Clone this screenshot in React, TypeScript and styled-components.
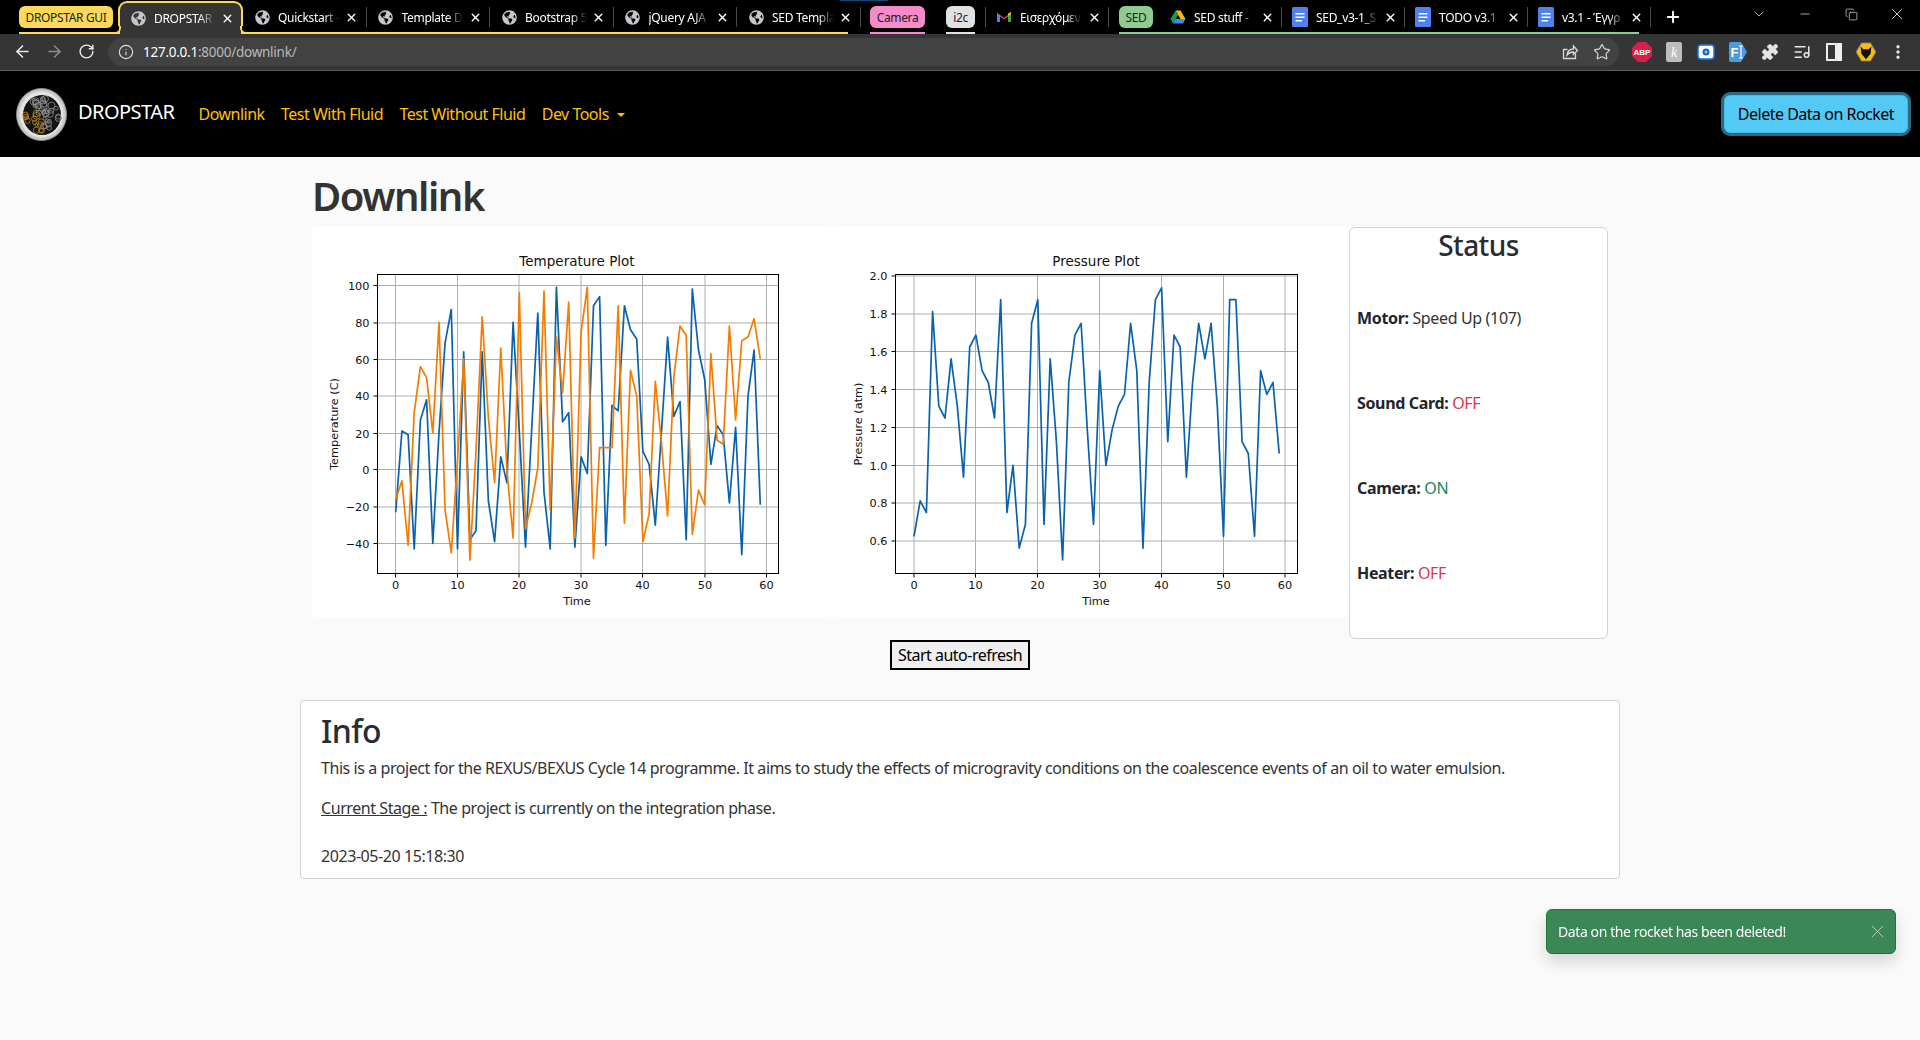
import React from "react";
import styled, { createGlobalStyle } from "styled-components";
import { ArrowLeft, ArrowRight, RotateCw, Info, Star, Puzzle, ListMusic, EllipsisVertical, X, Plus, ChevronDown, Minus, Copy } from "lucide-react";
import { FaGlobeAmericas } from "react-icons/fa";

const UI = `"Noto Sans", "Open Sans", Arial, sans-serif`;

const Global = createGlobalStyle`
  html, body { margin: 0; padding: 0; background: #fafafa; height: 100%; overflow: hidden; }
  body { font-family: ${UI}; font-size: 16px; color: #212529; }
  * { box-sizing: border-box; }
`;

const Page = styled.div`display: flex; flex-direction: column; height: 1040px; overflow: hidden; position: relative;`;

/* ---- browser chrome ---- */
const TabStrip = styled.div`display: flex; height: 34px; background: #000; padding-left: 19px; position: relative; flex: none;`;
const LoadLine = styled.div`position: absolute; top: 0; left: 840px; width: 48px; height: 1px; background: #0b4a7d;`;
const Group = styled.div<{ $c: string }>`
  display: flex; height: 34px; flex: none;
  box-shadow: inset 0 -2px 0 ${(p) => p.$c};
`;
const Chip = styled.div<{ $bg: string; $w: number; $mr?: number }>`
  width: ${(p) => p.$w}px; margin: 6px ${(p) => p.$mr ?? 0}px 6px 0; height: 22px; flex: none;
  background: ${(p) => p.$bg}; border-radius: 6px; color: #222;
  font-size: 12px; letter-spacing: -0.35px; display: flex; align-items: center; justify-content: center; white-space: nowrap;
`;
const Tab = styled.div<{ $w: number; $pl?: number }>`
  width: ${(p) => p.$w}px; height: 34px; display: flex; align-items: center;
  padding-left: ${(p) => p.$pl ?? 11}px; color: #fff; font-size: 12px; letter-spacing: -0.3px; flex: none;
`;
const ActiveTab = styled(Tab)`
  height: 33px; margin-top: 1px; border: 2px solid #fcd95b; border-bottom: none; border-radius: 9px 9px 0 0;
  background: #353535; padding-left: 10px; padding-right: 0; position: relative;
  &::before, &::after {
    content: ""; position: absolute; bottom: 0; width: 6px; height: 6px; background: #000;
    border-bottom: 2px solid #fcd95b;
  }
  &::before { left: -7px; border-right: 2px solid #fcd95b; border-bottom-right-radius: 6px; }
  &::after { right: -7px; border-left: 2px solid #fcd95b; border-bottom-left-radius: 6px; }
`;
const TabIcon = styled.span`width: 16px; height: 16px; flex: none; display: flex; align-items: center; justify-content: center; color: #c4c7cb;`;
const TabTitle = styled.span`
  flex: 1; min-width: 0; margin-left: 8px; overflow: hidden; white-space: nowrap;
  -webkit-mask-image: linear-gradient(90deg, #000 70%, transparent 94%);
  mask-image: linear-gradient(90deg, #000 70%, transparent 94%);
`;
const TabClose = styled.span<{ $tight?: boolean }>`
  width: 16px; height: 16px; margin-right: ${(p) => (p.$tight ? -5.5 : 6)}px; flex: none;
  display: flex; align-items: center; justify-content: center; color: #fff;
`;
const Sep = styled.div<{ $ml?: number; $mr?: number }>`
  width: 1px; height: 20px; margin: 7px ${(p) => p.$mr ?? 0}px 0 ${(p) => p.$ml ?? 0}px; background: #4a4a4a; flex: none;
`;
const NewTab = styled.div`width: 22px; height: 34px; margin-left: 11px; display: flex; align-items: center; justify-content: center; color: #fff; flex: none;`;
const WinControls = styled.div`margin-left: auto; display: flex; align-items: center; color: #f0f0f0; height: 34px; flex: none;`;
const WinBtn = styled.div`width: 46px; display: flex; justify-content: center; margin-top: -6px;`;

const Toolbar = styled.div`
  display: flex; align-items: center; height: 37px; background: #353535; border-bottom: 1px solid #5f5f5f;
  padding: 0 0 1px 12px; flex: none; color: #e3e3e3;
`;
const NavIcon = styled.div<{ $dim?: boolean }>`
  width: 20px; height: 20px; margin-right: 12px; display: flex; align-items: center; justify-content: center;
  color: ${(p) => (p.$dim ? "#8c8c8c" : "#ececec")}; flex: none;
`;
const Omnibox = styled.div`
  width: 1511px; height: 28px; background: #424242; border-radius: 14px;
  display: flex; align-items: center; padding: 0 8px 0 10px; flex: none; font-size: 13.5px; letter-spacing: -0.25px;
`;
const Url = styled.span`color: #b9b9b9; margin-left: 9px;`;
const UrlHost = styled.span`color: #fff;`;
const OmniRight = styled.div`margin-left: auto; display: flex; align-items: center; gap: 14px; color: #d8d8d8;`;
const Exts = styled.div`display: flex; align-items: center; gap: 12px; margin-left: 13px;`;
const Ext = styled.div`width: 20px; height: 20px; display: flex; align-items: center; justify-content: center; color: #e6e6e6; flex: none;`;

/* ---- navbar ---- */
const Navbar = styled.nav`display: flex; align-items: center; height: 86px; background: #000; padding: 0 12px 0 16px; flex: none;`;
const LogoWrap = styled.div`width: 51px; height: 53px; flex: none; margin-right: 11px;`;
const Brand = styled.a`color: #fff; font-size: 20px; letter-spacing: -0.55px; margin-right: 16px; padding-bottom: 5px; white-space: nowrap;`;
const NavLink = styled.a`color: #ffc107; font-size: 16px; letter-spacing: -0.5px; padding: 0 8.2px; white-space: nowrap; display: flex; align-items: center;`;
const Caret = styled.span`
  display: inline-block; margin-left: 8px; margin-top: 1px; width: 0; height: 0;
  border-left: 4.5px solid transparent; border-right: 4.5px solid transparent; border-top: 4.5px solid #ffc107;
`;
const DeleteBtn = styled.button`
  margin-left: auto; width: 184px; height: 38px; background: #54c9f5; border: 1px solid #3fbce9; border-radius: 6px; color: #000;
  box-shadow: 0 0 0 3px #2b6a80; font: 16px ${UI}; letter-spacing: -0.5px; padding: 0; white-space: nowrap;
`;

/* ---- content ---- */
const Container = styled.main`width: 1320px; margin: 0 auto; flex: 1;`;
const PageTitle = styled.h1`margin: 15px 0 7px 12px; font-size: 40px; line-height: 48px; font-weight: 600; letter-spacing: -1.45px; color: #333;`;
const Row = styled.div`display: flex; padding-left: 12px;`;
const ChartBox = styled.div`width: 520px; height: 390px; background: #fff; flex: none; border-radius: 3px;`;
const StatusCard = styled.section`
  width: 259px; height: 412px; margin-left: -3px; background: #fff; border: 1px solid #d3d3d3; border-radius: 6px;
  padding: 0 7px 0 7px; position: relative; display: flex; flex-direction: column; flex: none;
`;
const StatusTitle = styled.h3`margin: 0 0 44px; font-size: 28px; line-height: 34px; font-weight: 500; text-align: center; letter-spacing: -0.6px; color: #2a2d30;`;
const StatusRow = styled.p`margin: 0 0 61px; line-height: 24px; font-size: 16px; letter-spacing: -0.35px;`;
const Label = styled.b`font-weight: 700;`;
const Val = styled.span<{ $c?: string }>`color: ${(p) => p.$c ?? "#333"};`;
const BtnRow = styled.div`display: flex; justify-content: center; margin-top: 1px;`;
const PlainBtn = styled.button`
  width: 140px; height: 30px; background: #efefef; border: 2px solid #000; color: #000; padding: 0;
  font: 16px ${UI}; letter-spacing: -0.5px; white-space: nowrap;
`;
const InfoCard = styled.section`
  margin-top: 30px; height: 179px; background: #fff; border: 1px solid #d3d3d3; border-radius: 4px; padding: 11px 20px 0;
`;
const InfoTitle = styled.h2`margin: 0 0 6px; font-size: 32px; line-height: 38px; font-weight: 500; letter-spacing: -0.6px; color: #2a2d30;`;
const Para = styled.p<{ $mb: number }>`margin: 0 0 ${(p) => p.$mb}px; line-height: 24px; font-size: 16px; letter-spacing: -0.43px; color: #333; white-space: nowrap;`;
const Under = styled.span`text-decoration: underline;`;
const Toast = styled.div`
  position: fixed; right: 24px; bottom: 86px; width: 350px; height: 45px; background: #3b8755; border: 1px solid #1a7a33; border-radius: 6px;
  box-shadow: 0 8px 16px rgba(0,0,0,.15); color: #fff; font-size: 14px; letter-spacing: -0.4px;
  display: flex; align-items: center; padding: 0 7px 0 11px;
`;
const ToastClose = styled.span`margin-left: auto; display: flex; color: #b6d2bf;`;

/* ---- icons ---- */
const Globe = () => <TabIcon><FaGlobeAmericas size={15} /></TabIcon>;
const Gmail = () => (
  <TabIcon><svg width="16" height="16" viewBox="0 0 16 16">
    <path d="M1 3.500 8 9l7-5.500V13h-3V7.500L8 10.500 4 7.500V13H1z" fill="#ea4335" />
    <path d="M1 4v9h3V7z" fill="#4285f4" /><path d="M15 4v9h-3V7z" fill="#34a853" /><path d="M12 4.800 15 2.800V5L12 7.500z" fill="#fbbc04" />
  </svg></TabIcon>
);
const Drive = () => (
  <TabIcon><svg width="16" height="16" viewBox="0 0 16 16">
    <path d="M5.500 1.500h5L15.500 10h-5z" fill="#fbbc04" /><path d="M5.500 1.500 .5 10 3 14.500 8 6z" fill="#0f9d58" />
    <path d="M3 14.500h10L15.500 10h-10z" fill="#4285f4" />
  </svg></TabIcon>
);
const Docs = () => (
  <TabIcon><svg width="16" height="20" viewBox="0 0 16 20">
    <rect x="0" y="0" width="16" height="20" rx="1.500" fill="#4e82ee" />
    <path d="M3.500 6h9v1.600h-9zM3.500 9.500h9v1.600h-9zM3.500 13h6.500v1.600H3.500z" fill="#fff" />
  </svg></TabIcon>
);
const Close = ({ tight }: { tight?: boolean }) => <TabClose $tight={tight}><X size={13} strokeWidth={2.6} /></TabClose>;

const ShareIcon = () => (
  <svg width="18" height="18" viewBox="0 0 18 18" fill="none" stroke="currentColor" strokeWidth="1.300">
    <path d="M14.500 10.500V15.500H2.500V6.500H6.500" /><path d="M6 12c.5-4 3-6 6.500-6V3l4 4.500-4 4V9C9.500 9 7.500 10 6 12z" />
  </svg>
);
const Abp = () => (
  <svg width="20" height="20" viewBox="0 0 20 20">
    <path d="M6 0h8l6 6v8l-6 6H6l-6-6V6z" fill="#d81f4a" />
    <text x="10" y="13" textAnchor="middle" fontSize="8" fontWeight="700" fill="#fff" fontFamily="Liberation Sans">ABP</text>
  </svg>
);
const KExt = () => (
  <svg width="16" height="20" viewBox="0 0 16 20">
    <rect width="16" height="20" rx="2" fill="#bdbdbd" />
    <text x="8" y="15" textAnchor="middle" fontSize="14" fontStyle="italic" fill="#fff" fontFamily="Liberation Serif">k</text>
  </svg>
);
const CamExt = () => (
  <svg width="18" height="18" viewBox="0 0 18 18">
    <rect x="1" y="2" width="16" height="14" rx="3" fill="#fff" stroke="#1a73e8" strokeWidth="1.500" />
    <circle cx="9" cy="9" r="3.500" fill="#1a5fd0" /><circle cx="9" cy="9" r="1.400" fill="#9fc3f7" />
  </svg>
);
const FtExt = () => (
  <svg width="18" height="20" viewBox="0 0 18 20">
    <path d="M2 0h10l6 10-6 10H2a2 2 0 0 1-2-2V2a2 2 0 0 1 2-2z" fill="#4a9be0" />
    <text x="1.500" y="15" fontSize="13" fontWeight="700" fill="#fff" fontFamily="Liberation Sans">F</text>
    <path d="M12 4v12M10 4h4M10 16h4" stroke="#fff" strokeWidth="1.200" />
  </svg>
);
const PanelIcon = () => (
  <svg width="16" height="18" viewBox="0 0 16 18">
    <rect x="1" y="1" width="14" height="16" fill="none" stroke="#eee" strokeWidth="2" /><rect x="9" y="1" width="6" height="16" fill="#eee" />
  </svg>
);
const Wolves = () => (
  <svg width="22" height="22" viewBox="0 0 22 22">
    <path d="M6 1h10l6 10-6 10H6L0 11z" fill="#fdb913" stroke="#777" strokeWidth="1" />
    <path d="M5 5l3 3h6l3-3-1 8-5 6-5-6z" fill="#111" />
  </svg>
);

let seed = 7;
const rnd = () => { seed = (seed * 1103 + 12345) % 65536; return seed / 65536; };
const bubbles = Array.from({ length: 46 }, () => {
  const a = rnd() * Math.PI * 2, d = Math.sqrt(rnd()) * 17;
  return { x: 26 + Math.cos(a) * d, y: 27 + Math.sin(a) * d, r: 1.5 + rnd() * 2, gold: Math.cos(a) < 0.1 && Math.sin(a) > -0.5 };
});
const Logo = () => (
  <svg width="51" height="53" viewBox="0 0 51 53" style={{ display: "block" }}>
    <ellipse cx="25.5" cy="26.5" rx="25" ry="26" fill="#c9c9c9" stroke="#8a8a8a" />
    <ellipse cx="25.5" cy="26.5" rx="22" ry="23" fill="#e3e3e3" />
    <ellipse cx="26" cy="27" rx="19" ry="20" fill="#141414" />
    {bubbles.map((b, i) => (
      <circle key={i} cx={b.x} cy={b.y} r={b.r} fill="none" stroke={b.gold ? "#b8891e" : "#8f8f8f"} strokeWidth=".8" />
    ))}
  </svg>
);

/* ---- charts (matplotlib pictures) ---- */
const tempBlue = [-23,21,19,-43,27,38,-40,20,69,87,-43,64,-38,-33,64,-17,-39,7,-7,80,21,-42,22,85,-12,-43,99,26,31,-42,7,-2,89,94,-41,35,32,89,76,71,10,3,-30,20,72,29,37,-38,98,65,49,3,24,19,-18,23,-46,40,65,-19];
const tempOrange = [-16,-6,-41,31,56,50,20,80,-22,-45,5,60,-49,10,83,28,-7,66,0,-37,96,-32,-18,1,97,-22,72,42,91,-37,75,99,-48,12,12,12,89,-29,54,40,-39,-24,48,15,-25,50,78,73,-35,-11,-19,63,16,14,78,27,70,72,82,60];
const press = [.625,.8125,.75,1.8125,1.3125,1.25,1.5625,1.3125,.9375,1.625,1.6875,1.5,1.4375,1.25,1.875,.75,1,.5625,.6875,1.75,1.875,.6875,1.5625,1.125,.5,1.4375,1.6875,1.75,1.1875,.6875,1.5,1,1.1875,1.3125,1.375,1.75,1.5,.5625,1.4375,1.875,1.9375,1.125,1.6875,1.625,.9375,1.4375,1.75,1.5625,1.75,1.3125,.625,1.875,1.875,1.125,1.0625,.625,1.5,1.375,1.4375,1.0625];

type ChartProps = {
  title: string; ylabel: string; left: number; right: number; titleX: number; ylabelX: number;
  gridX: number[]; gridY: number[]; yTicks: string[];
  x0: number; dx: number; y0: number; dy: number; v0: number;
  series: { color: string; data: number[] }[];
};
const TOP = 47.5, BOTTOM = 346.5;
const Chart = ({ title, ylabel, left, right, titleX, ylabelX, gridX, gridY, yTicks, x0, dx, y0, dy, v0, series }: ChartProps) => (
  <svg width="520" height="390" viewBox="0 0 520 390" fontFamily="DejaVu Sans" fill="#111" style={{ display: "block" }}>
    {gridX.map((x) => <line key={x} x1={x} x2={x} y1={TOP} y2={BOTTOM} stroke="#adadad" />)}
    {gridY.map((y) => <line key={y} x1={left} x2={right} y1={y} y2={y} stroke="#adadad" />)}
    {series.map((s) => (
      <polyline key={s.color} fill="none" stroke={s.color} strokeWidth="1.7" strokeLinejoin="round"
        points={s.data.map((v, i) => `${(x0 + i * dx).toFixed(1)},${(y0 + (v0 - v) * dy).toFixed(1)}`).join(" ")} />
    ))}
    <rect x={left} y={TOP} width={right - left} height={BOTTOM - TOP} fill="none" stroke="#000" />
    {gridX.map((x, i) => (
      <g key={x}>
        <line x1={x} x2={x} y1={BOTTOM} y2={BOTTOM + 4} stroke="#000" />
        <text x={x} y={BOTTOM + 15} fontSize="11.3" textAnchor="middle">{i * 10}</text>
      </g>
    ))}
    {gridY.map((y, i) => (
      <g key={y}>
        <line x1={left - 4} x2={left} y1={y} y2={y} stroke="#000" />
        <text x={left - 8} y={y + 4} fontSize="11.3" textAnchor="end">{yTicks[i]}</text>
      </g>
    ))}
    <text x={titleX} y={39} fontSize="13.5" textAnchor="middle">{title}</text>
    <text x={titleX} y={378} fontSize="11.3" textAnchor="middle">Time</text>
    <text transform={`translate(${ylabelX} 197) rotate(-90)`} fontSize="11.3" textAnchor="middle">{ylabel}</text>
  </svg>
);

const BLUE = "#0a62ad", ORANGE = "#f57c00";

export default function App() {
  return (
    <Page>
      <Global />
      <TabStrip>
        <LoadLine />
        <Group $c="#fcd95b">
          <Chip $bg="#fcd95b" $w={94} $mr={5}>DROPSTAR GUI</Chip>
          <ActiveTab $w={125}><Globe /><TabTitle>DROPSTAR</TabTitle><Close /></ActiveTab>
          <Tab $w={122.5}><Globe /><TabTitle>Quickstart -</TabTitle><Close /></Tab><Sep />
          <Tab $w={122.5}><Globe /><TabTitle>Template D</TabTitle><Close /></Tab><Sep />
          <Tab $w={122.5}><Globe /><TabTitle>Bootstrap 5</TabTitle><Close /></Tab><Sep />
          <Tab $w={122.5}><Globe /><TabTitle>jQuery AJA</TabTitle><Close /></Tab><Sep />
          <Tab $w={111}><Globe /><TabTitle>SED Templa</TabTitle><Close tight /></Tab>
        </Group>
        <Sep $ml={12} $mr={9} />
        <Group $c="#f78acb"><Chip $bg="#f78acb" $w={55}>Camera</Chip></Group>
        <Group $c="#000"><Chip $bg="transparent" $w={21} /></Group>
        <Group $c="#dfe1e5"><Chip $bg="#dfe1e5" $w={29}>i2c</Chip></Group>
        <Sep $ml={10} />
        <Tab $w={122} $pl={10}><Gmail /><TabTitle>Εισερχόμεν</TabTitle><Close /></Tab>
        <Sep $mr={10} />
        <Group $c="#8fcb93">
          <Chip $bg="#8fcb93" $w={34} $mr={5}>SED</Chip>
          <Tab $w={123} $pl={12}><Drive /><TabTitle>SED stuff -</TabTitle><Close /></Tab><Sep />
          <Tab $w={122} $pl={10}><Docs /><TabTitle>SED_v3-1_S</TabTitle><Close /></Tab><Sep />
          <Tab $w={122} $pl={10}><Docs /><TabTitle>TODO v3.1</TabTitle><Close /></Tab><Sep />
          <Tab $w={111} $pl={10}><Docs /><TabTitle>v3.1 - Έγγρ</TabTitle><Close tight /></Tab>
        </Group>
        <Sep $ml={11} />
        <NewTab><Plus size={18} strokeWidth={2.5} /></NewTab>
        <WinControls>
          <WinBtn><ChevronDown size={16} strokeWidth={1.1} /></WinBtn>
          <WinBtn><Minus size={14} strokeWidth={1.2} /></WinBtn>
          <WinBtn><Copy size={13} strokeWidth={1.2} /></WinBtn>
          <WinBtn><X size={18} strokeWidth={1.1} /></WinBtn>
        </WinControls>
      </TabStrip>

      <Toolbar>
        <NavIcon><ArrowLeft size={19} strokeWidth={2} /></NavIcon>
        <NavIcon $dim><ArrowRight size={19} strokeWidth={2} /></NavIcon>
        <NavIcon><RotateCw size={17} strokeWidth={2} /></NavIcon>
        <Omnibox>
          <Info size={16} strokeWidth={1.7} color="#ddd" />
          <Url><UrlHost>127.0.0.1</UrlHost>:8000/downlink/</Url>
          <OmniRight>
            <ShareIcon />
            <Star size={18} strokeWidth={1.6} />
          </OmniRight>
        </Omnibox>
        <Exts>
          <Ext><Abp /></Ext>
          <Ext><KExt /></Ext>
          <Ext><CamExt /></Ext>
          <Ext><FtExt /></Ext>
          <Ext><Puzzle size={18} fill="#e6e6e6" strokeWidth={1} /></Ext>
          <Ext><ListMusic size={18} strokeWidth={2} /></Ext>
          <Ext><PanelIcon /></Ext>
          <Ext><Wolves /></Ext>
          <Ext><EllipsisVertical size={18} strokeWidth={2.4} /></Ext>
        </Exts>
      </Toolbar>

      <Navbar>
        <LogoWrap><Logo /></LogoWrap>
        <Brand>DROPSTAR</Brand>
        <NavLink>Downlink</NavLink>
        <NavLink>Test With Fluid</NavLink>
        <NavLink>Test Without Fluid</NavLink>
        <NavLink>Dev Tools<Caret /></NavLink>
        <DeleteBtn>Delete Data on Rocket</DeleteBtn>
      </Navbar>

      <Container>
        <PageTitle>Downlink</PageTitle>
        <Row>
          <ChartBox>
            <Chart
              title="Temperature Plot" ylabel="Temperature (C)" left={65.5} right={466.5} titleX={265} ylabelX={26}
              gridX={[83.5, 145.5, 207, 269, 330.5, 393, 454.5]}
              gridY={[58.5, 96, 132.5, 169, 206.5, 242.5, 280, 316.5]}
              yTicks={["100", "80", "60", "40", "20", "0", "−20", "−40"]}
              x0={83.7} dx={6.18} y0={58.5} dy={1.843} v0={100}
              series={[{ color: BLUE, data: tempBlue }, { color: ORANGE, data: tempOrange }]}
            />
          </ChartBox>
          <ChartBox>
            <Chart
              title="Pressure Plot" ylabel="Pressure (atm)" left={63.5} right={465.5} titleX={264} ylabelX={30}
              gridX={[82, 143.5, 205.5, 267.5, 329.5, 391.5, 453]}
              gridY={[49, 87, 124.5, 162.5, 200.5, 238.5, 276, 314]}
              yTicks={["2.0", "1.8", "1.6", "1.4", "1.2", "1.0", "0.8", "0.6"]}
              x0={82} dx={6.19} y0={49} dy={189.3} v0={2}
              series={[{ color: BLUE, data: press }]}
            />
          </ChartBox>
          <StatusCard>
            <StatusTitle>Status</StatusTitle>
            <StatusRow><Label>Motor:</Label> <Val>Speed Up (107)</Val></StatusRow>
            <StatusRow><Label>Sound Card:</Label> <Val $c="#dc3545">OFF</Val></StatusRow>
            <StatusRow><Label>Camera:</Label> <Val $c="#198754">ON</Val></StatusRow>
            <StatusRow><Label>Heater:</Label> <Val $c="#dc3545">OFF</Val></StatusRow>
          </StatusCard>
        </Row>
        <BtnRow><PlainBtn>Start auto-refresh</PlainBtn></BtnRow>
        <InfoCard>
          <InfoTitle>Info</InfoTitle>
          <Para $mb={16}>This is a project for the REXUS/BEXUS Cycle 14 programme. It aims to study the effects of microgravity conditions on the coalescence events of an oil to water emulsion.</Para>
          <Para $mb={24}><Under>Current Stage :</Under> The project is currently on the integration phase.</Para>
          <Para $mb={0}>2023-05-20 15:18:30</Para>
        </InfoCard>
      </Container>

      <Toast>
        Data on the rocket has been deleted!
        <ToastClose><X size={21} strokeWidth={1.1} /></ToastClose>
      </Toast>
    </Page>
  );
}
